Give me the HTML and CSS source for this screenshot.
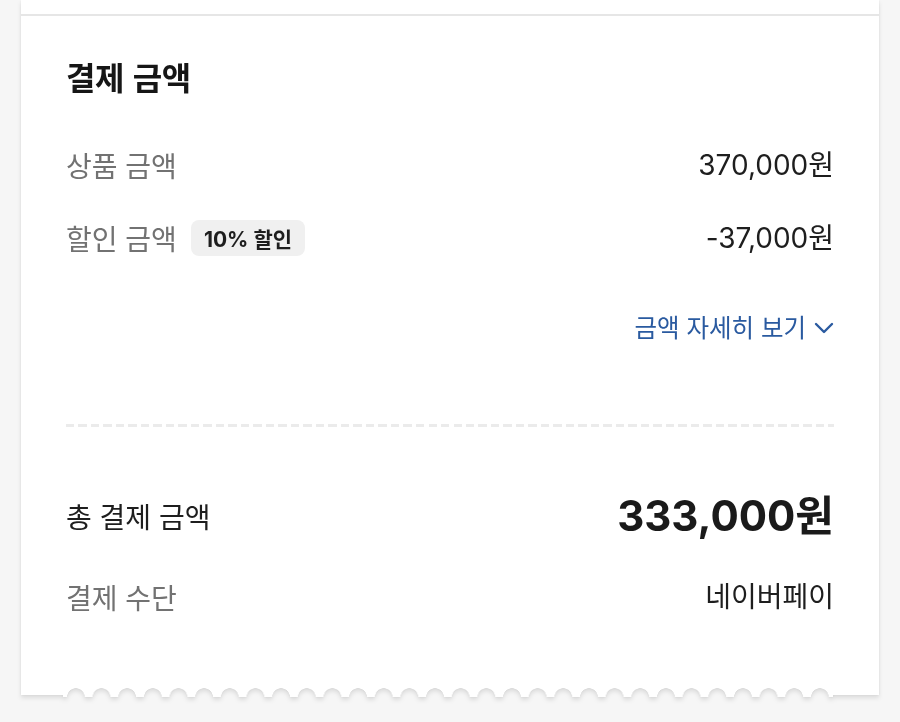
FILE: index.html
```html
<!DOCTYPE html>
<html lang="ko">
<head>
<meta charset="utf-8">
<title>결제 금액</title>
<link rel="stylesheet" href="styles.css">
</head>
<body>
<div class="page">
  <div class="receipt">
    <div class="prev"></div>
    <section class="card">
      <h2 class="title">결제 금액</h2>
      <div class="row row-first">
        <span class="label">상품 금액</span>
        <span class="value">370,000원</span>
      </div>
      <div class="row row-second">
        <span class="label-group">
          <span class="label">할인 금액</span>
          <span class="badge">10% 할인</span>
        </span>
        <span class="value">-37,000원</span>
      </div>
      <div class="more">
        <span class="more-text">금액 자세히 보기</span>
        <svg class="chev" width="20" height="12" viewBox="0 0 20 12" aria-hidden="true"><path d="M2 2 L10 10 L18 2" fill="none" stroke="#2a5aa0" stroke-width="2.4" stroke-linecap="round" stroke-linejoin="round"/></svg>
      </div>
      <div class="dash"></div>
      <div class="row row-total">
        <span class="total-label">총 결제 금액</span>
        <span class="total-value">333,000원</span>
      </div>
      <div class="row row-method">
        <span class="label">결제 수단</span>
        <span class="value">네이버페이</span>
      </div>
    </section>
    <div class="tear">
      <div class="tear-side tear-left"></div>
      <div class="tear-mid"></div>
      <div class="tear-side tear-right"></div>
    </div>
  </div>
</div>
</body>
</html>
```
FILE: styles.css
```css
html, body {
  margin: 0;
  padding: 0;
}
body {
  background: #f6f6f6;
  font-family: "Noto Sans CJK KR", "Noto Sans", sans-serif;
  color: #1e1e1e;
}
.page {
  width: 900px;
  height: 722px;
  overflow: hidden;
  padding: 0 21px;
  box-sizing: border-box;
}
.receipt {
  display: flex;
  flex-direction: column;
  filter: drop-shadow(0 0 1px rgba(0,0,0,0.06)) drop-shadow(0 3px 2px rgba(0,0,0,0.10));
}
.prev {
  height: 14px;
  background: #fff;
  border-bottom: 2px solid #e6e6e6;
}
.card {
  background: #fff;
  padding: 42px 45px 72px 45px;
  display: flex;
  flex-direction: column;
}
.title {
  margin: 0;
  font-size: 32px;
  line-height: 36px;
  font-weight: 700;
  color: #161616;
  letter-spacing: -0.4px;
}
.row {
  display: flex;
  justify-content: space-between;
  align-items: center;
  height: 36px;
}
.row-first { margin-top: 53px; }
.row-second { margin-top: 37px; }
.label-group {
  display: flex;
  align-items: center;
  gap: 14px;
}
.label {
  font-size: 28px;
  line-height: 36px;
  color: #727272;
}
.value {
  font-family: Inter, "Noto Sans CJK KR", sans-serif;
  font-size: 28px;
  line-height: 36px;
  color: #1e1e1e;
}
.badge {
  display: inline-flex;
  align-items: center;
  height: 36px;
  padding: 0 13px;
  border-radius: 8px;
  background: #f0f0f0;
  font-family: Inter, "Noto Sans CJK KR", sans-serif;
  font-size: 21px;
  font-weight: 700;
  color: #1e1e1e;
}
.more {
  margin-top: 56px;
  display: flex;
  justify-content: flex-end;
  align-items: center;
  gap: 8px;
  height: 30px;
}
.more-text {
  font-size: 24.5px;
  line-height: 30px;
  color: #2a5aa0;
}
.chev {
  margin-top: 2px;
}
.dash {
  margin-top: 82px;
  height: 3px;
  background: repeating-linear-gradient(to right, #ebebeb 0 8px, transparent 8px 12.5px);
}
.row-total {
  margin-top: 65px;
  height: 48px;
}
.total-label {
  font-size: 28px;
  line-height: 48px;
  color: #1e1e1e;
}
.total-value {
  font-family: Inter, "Noto Sans CJK KR", sans-serif;
  font-size: 42px;
  line-height: 48px;
  font-weight: 700;
  color: #1a1a1a;
}
.row-method { margin-top: 39px; }
.tear {
  display: flex;
  align-items: flex-start;
}
.tear-side {
  background: #fff;
  height: 8px;
}
.tear-left { width: 42px; }
.tear-right { flex: 1; }
.tear-mid {
  width: 770px;
  height: 10px;
  background: #fff;
  -webkit-mask: radial-gradient(circle at 50% 100%, transparent 8.5px, #000 9px) 0 100% / 25.667px 10px repeat-x;
  mask: radial-gradient(circle at 50% 100%, transparent 8.5px, #000 9px) 0 100% / 25.667px 10px repeat-x;
}
```
